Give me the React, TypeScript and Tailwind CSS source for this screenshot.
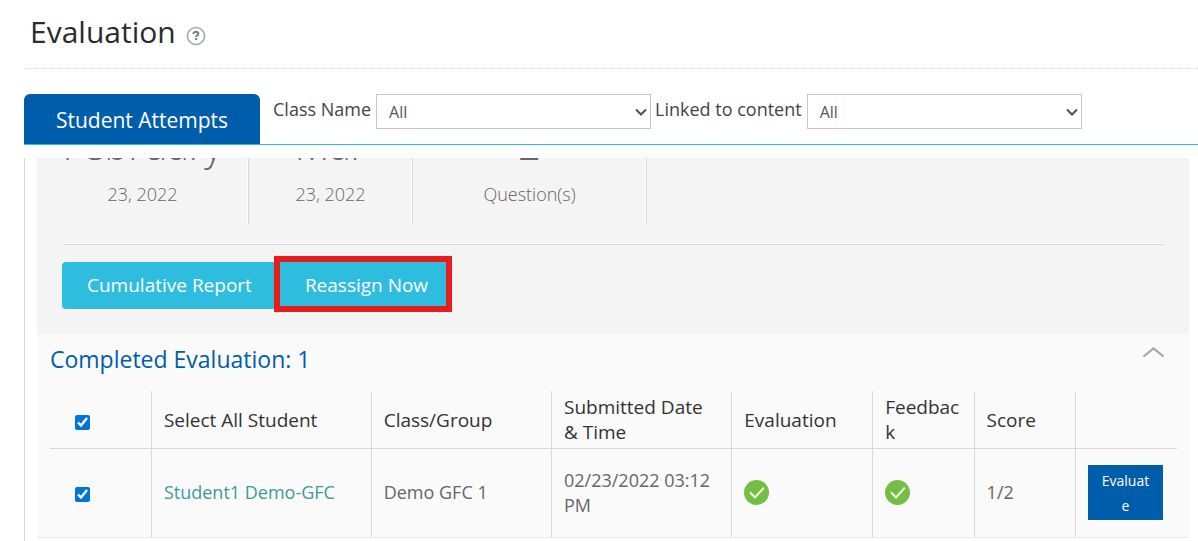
import { useState } from "react";

const stats = [
  { value: "February", label: "23, 2022", width: "w-[212px]" },
  { value: "Mar", label: "23, 2022", width: "w-[164px]" },
  { value: "2", label: "Question(s)", width: "w-[234px]" },
];

const columns = [
  { title: "Select All Student", width: "w-[19.5%]" },
  { title: "Class/Group", width: "w-[16%]" },
  { title: "Submitted Date & Time", width: "w-[16%]" },
  { title: "Evaluation", width: "w-[12.5%]" },
  { title: "Feedback", width: "w-[9%]" },
  { title: "Score", width: "w-[9%]" },
];

const students = [
  {
    name: "Student1 Demo-GFC",
    group: "Demo GFC 1",
    submitted: "02/23/2022 03:12 PM",
    score: "1/2",
  },
];

function HelpIcon() {
  return (
    <svg className="size-5" viewBox="0 0 20 20" fill="none" aria-hidden>
      <circle cx="10" cy="10" r="8.6" stroke="#a3a9aa" strokeWidth="1.5" />
      <path
        d="M7.400 7.800c.2-1.300 1.200-1.900 2.500-1.900 1.400 0 2.400.7 2.400 1.900 0 1.500-2.200 1.500-2.200 3.200"
        stroke="#7d8789"
        strokeWidth="2.200"
      />
      <path d="M9 12h2.200v2H9z" fill="#7d8789" />
    </svg>
  );
}

function DoneIcon({ label }: { label: string }) {
  return (
    <svg className="size-[25px]" viewBox="0 0 25 25" fill="none" role="img" aria-label={label}>
      <circle cx="12.5" cy="12.5" r="12.5" fill="#72bf44" />
      <path d="M6 12.200l5 5.300 8.800-9.800" stroke="#f1f8ec" strokeWidth="2" />
    </svg>
  );
}

function Filter({ id, label }: { id: string; label: string }) {
  return (
    <div className="flex items-start gap-[5px]">
      <label htmlFor={id} className="pt-[3px] text-lg leading-6 text-[#444]">
        {label}
      </label>
      <div className="relative">
        <select
          id={id}
          className="h-[35px] w-[275px] appearance-none border border-[#c6c6c6] bg-white px-3 text-base text-[#555]"
        >
          <option>All</option>
        </select>
        <svg
          className="pointer-events-none absolute right-1 top-3.5 h-2 w-3"
          viewBox="0 0 12 8"
          fill="none"
          aria-hidden
        >
          <path d="M1 1.500l5 5 5-5" stroke="#505050" strokeWidth="2" />
        </svg>
      </div>
    </div>
  );
}

export default function App() {
  const [checked, setChecked] = useState([true]);
  const allChecked = checked.every(Boolean);

  return (
    <div className="bg-white pl-6 font-['Open_Sans',sans-serif] text-[#666]">
      <header className="flex h-[69px] items-start gap-2.5 border-b border-dotted border-[#d8d8d8] pl-1.5 pt-3">
        <h1 className="text-[30px] leading-10 text-[#2b2b2b]">Evaluation</h1>
        <button type="button" aria-label="Help" className="mt-3.5">
          <HelpIcon />
        </button>
      </header>

      <div className="mt-[25px] flex items-start border-b border-[#2fbddf]">
        <button
          type="button"
          className="h-[50px] w-[236px] rounded-t-md bg-[#005dab] pt-1 text-[21px] text-white"
        >
          Student Attempts
        </button>
        <div className="ml-[13px] flex gap-1">
          <Filter id="class-name" label="Class Name" />
          <Filter id="linked-content" label="Linked to content" />
        </div>
      </div>

      <main className="mt-[13px] overflow-hidden border-l border-[#d8d8d8] pb-1 pl-3 pr-[9px]">
        <section className="bg-[#f4f4f4] px-[25px] pb-[25px]">
          <div className="-mt-10 flex border-b border-[#d8d8d8] pb-5 shadow-[inset_0_-1px_#fff]">
            {stats.map(({ value, label, width }) => (
              <div
                key={value}
                className={`${width} h-[106px] shrink-0 border-r border-[#d8d8d8] text-center font-light shadow-[inset_-1px_0_#fff] first:w-[187px] first:pr-[25px]`}
              >
                <div className="text-[40px] leading-[54px]">{value}</div>
                <div className="mt-2.5 text-lg leading-6">{label}</div>
              </div>
            ))}
          </div>
          <div className="mt-[17px] flex">
            <button
              type="button"
              className="h-[47px] rounded-l-sm bg-[#2fbddf] pl-[25px] pr-[23px] text-[19px] text-white"
            >
              Cumulative Report
            </button>
            <div className="relative">
              <button
                type="button"
                className="h-[47px] bg-[#2fbddf] pl-[30px] pr-[23px] text-[19px] text-white"
              >
                Reassign Now
              </button>
              <div className="pointer-events-none absolute -inset-x-px -bottom-[3px] -top-1.5 border-6 border-[#e71c1c]" />
            </div>
          </div>
        </section>

        <section className="border-b border-[#ebebeb] bg-[#fafafa] pl-[13px] pr-3">
          <div className="flex h-[57px] items-start justify-between pr-3 pt-[7px]">
            <h2 className="text-[23px] leading-9 text-[#005dab]">
              Completed Evaluation: {students.length}
            </h2>
            <button type="button" aria-label="Collapse" className="mt-[5px]">
              <svg className="h-3 w-[23px]" viewBox="0 0 23 12" fill="none" aria-hidden>
                <path d="M1.500 10.500l10-8 10 8" stroke="#a6a6a6" strokeWidth="2.200" />
              </svg>
            </button>
          </div>

          <table className="w-full table-fixed border-collapse text-lg leading-[25px]">
            <thead>
              <tr className="h-[57px] border-b border-[#d8d8d8] text-left text-[19px] text-[#333] *:pt-0.5">
                <th className="w-[9%] border-r border-[#d8d8d8] pl-[25px]">
                  <input
                    type="checkbox"
                    aria-label="Select all"
                    className="mt-1 block size-[15px] accent-[#0075d9]"
                    checked={allChecked}
                    onChange={() => setChecked(checked.map(() => !allChecked))}
                  />
                </th>
                {columns.map(({ title, width }) => (
                  <th
                    key={title}
                    className={`${width} break-words border-r border-[#d8d8d8] pl-3 pr-3 font-normal`}
                  >
                    {title}
                  </th>
                ))}
                <th className="w-[9%]" />
              </tr>
            </thead>
            <tbody>
              {students.map((student, i) => (
                <tr key={student.name} className="h-[89px] *:border-r *:border-[#d8d8d8] *:last:border-r-0">
                  <td className="pl-[25px]">
                    <input
                      type="checkbox"
                      aria-label={student.name}
                      className="mt-1 block size-[15px] accent-[#0075d9]"
                      checked={checked[i]}
                      onChange={() => setChecked(checked.map((c, j) => (j === i ? !c : c)))}
                    />
                  </td>
                  <td className="pl-3">
                    <a href="#" className="text-[#3d9a99]">
                      {student.name}
                    </a>
                  </td>
                  <td className="pl-3">{student.group}</td>
                  <td className="px-3">{student.submitted}</td>
                  <td className="pl-3">
                    <DoneIcon label="Evaluated" />
                  </td>
                  <td className="pl-3">
                    <DoneIcon label="Feedback given" />
                  </td>
                  <td className="pl-3">{student.score}</td>
                  <td className="px-3">
                    <button
                      type="button"
                      className="block h-[55px] w-[75px] break-words bg-[#005dab] px-3 text-sm leading-[25px] text-white"
                    >
                      Evaluate
                    </button>
                  </td>
                </tr>
              ))}
            </tbody>
          </table>
        </section>
      </main>
    </div>
  );
}
